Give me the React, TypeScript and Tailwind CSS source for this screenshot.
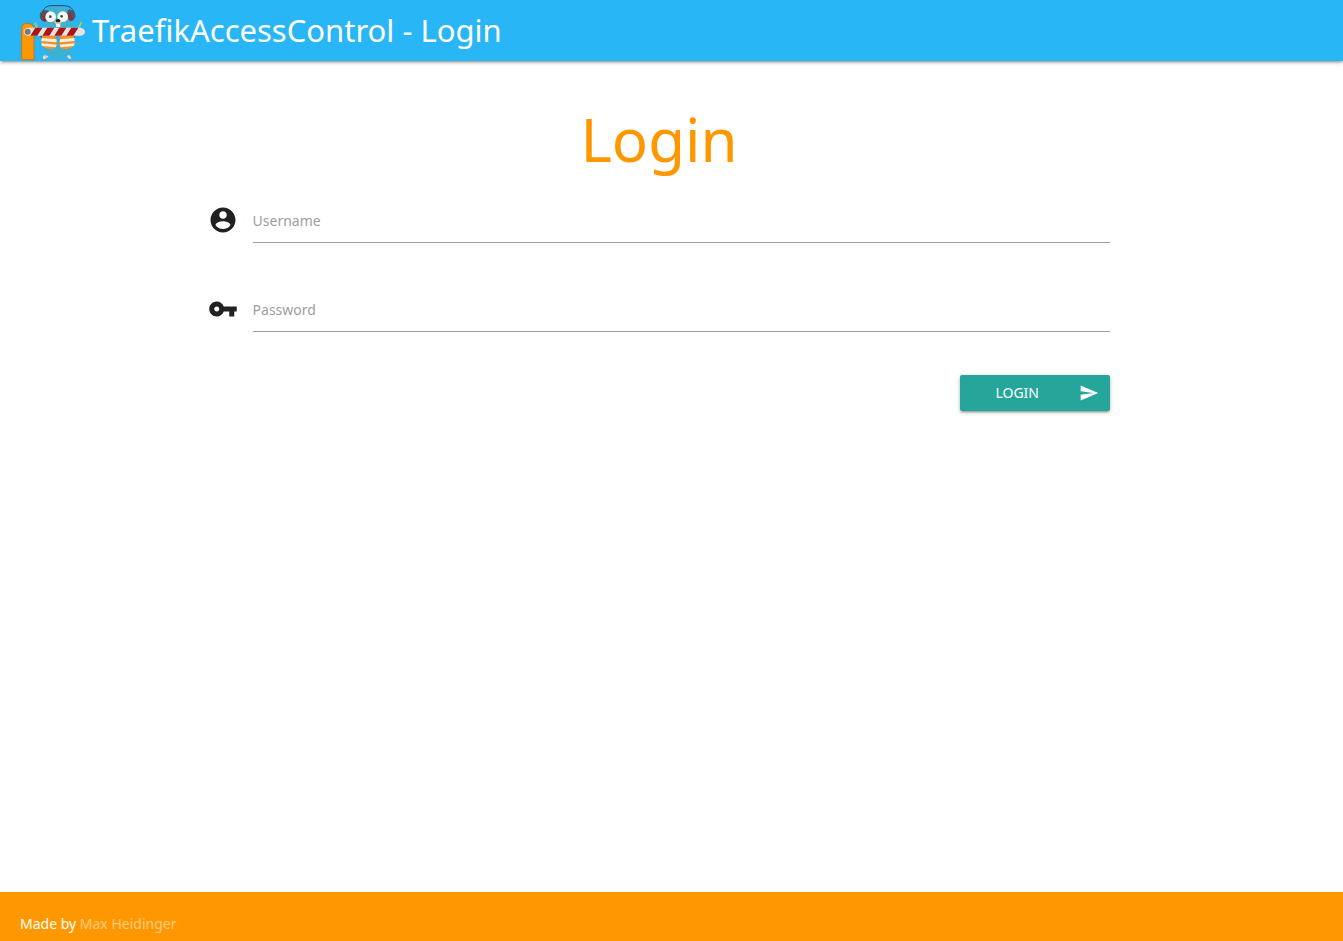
import type { ReactNode } from "react";

function Logo() {
  return (
    <svg viewBox="30 12 198 174" className="h-[58px] w-[66px] shrink-0" aria-hidden="true">
      <path d="M76 70l8 20M214 68l-10 20" stroke="#b5cf4b" strokeWidth="5" strokeLinecap="round" />
      <path d="M102 166q-6 4-2 11q8 3 16-9zM170 168l6 8q6 3 8-2q-1-7-8-9z" fill="#f2d3b4" />
      <path d="M107 45Q111 17 144 17Q178 17 182 45L188 78Q192 118 188 142Q180 173 143 174Q103 172 98 143Q95 105 104 76Z" fill="#3fb0cf" />
      <path d="M97 38Q102 17 126 17H163Q187 18 192 38" fill="none" stroke="#254b61" strokeWidth="3" />
      <path d="M108 30Q88 31 89 48Q91 64 105 65Q116 53 116 33Z" fill="#505461" />
      <path d="M178 28Q195 32 197 47Q194 60 185 62Q174 51 172 32Z" fill="#505461" />
      <path d="M104 39Q94 51 101 64Q107 68 112 59L115 38Z" fill="#833443" />
      <path d="M178 39Q190 50 188 61Q180 67 175 56L171 38Z" fill="#833443" />
      <circle cx="122" cy="50" r="16" fill="#f7f7f4" />
      <circle cx="158" cy="50" r="16" fill="#f7f7f4" />
      <circle cx="121" cy="50" r="4" fill="#344d55" />
      <circle cx="155" cy="49" r="4" fill="#344d55" />
      <path d="M138 69h13v12h-13z" fill="#f7f7f4" />
      <ellipse cx="144" cy="66" rx="11" ry="6" fill="#d6c7a5" />
      <ellipse cx="144" cy="62" rx="7" ry="5" fill="#222" />
      <path d="M94 101q-3 12 5 15M190 101q4 12-4 16" fill="none" stroke="#63533c" strokeWidth="5" />
      <path d="M96 105H137L141 137Q132 151 112 146Q98 143 94 133ZM151 105H192L195 133Q187 147 169 148Q152 147 148 137Z" fill="#f29325" />
      <path d="M95 114L139 118L140 127L94 123ZM94 130L140 134L137 142L96 138ZM150 118L193 114L194 123L149 127ZM149 134L194 130L191 138L152 142Z" fill="#f5eee5" />
      <path d="M35 179V86Q36 70 53 70Q70 71 72 87V179Z" fill="#ff9800" stroke="#b87826" strokeWidth="3" />
      <path d="M54 83H213Q224 86 225 96Q223 106 213 107H54Q41 105 41 95Q42 84 54 83Z" fill="#e6e3e1" />
      <path d="M76 83H97L82 107H61ZM112 83H133L118 107H97ZM148 83H169L154 107H133ZM184 83H205L190 107H169Z" fill="#ad1519" />
      <circle cx="53" cy="95" r="9" fill="#78797b" />
    </svg>
  );
}

interface FieldProps {
  id: string;
  label: string;
  type: string;
  autoComplete: string;
  icon: ReactNode;
}

function Field({ id, label, type, autoComplete, icon }: FieldProps) {
  return (
    <div className="flex">
      <svg viewBox="0 0 24 24" className="mt-2 h-[30px] w-[30px] shrink-0 text-[#212121]" fill="currentColor" aria-hidden="true">
        {icon}
      </svg>
      <div className="relative ml-[15px] flex-1">
        <input
          id={id}
          type={type}
          autoComplete={autoComplete}
          placeholder=" "
          className="peer block h-[46px] w-full border-b border-[#9e9e9e] bg-transparent text-sm outline-none focus:border-[#26a69a]"
        />
        <label
          htmlFor={id}
          className="pointer-events-none absolute top-3.5 left-0 hidden text-sm text-[#9e9e9e] peer-placeholder-shown:block"
        >
          {label}
        </label>
      </div>
    </div>
  );
}

export default function App() {
  return (
    <div className="flex min-h-screen flex-col bg-white font-['Noto_Sans',sans-serif] text-black/87">
      <header className="flex h-[61px] items-center bg-[#29b6f6] pl-5 text-white shadow-[0_2px_2px_0_rgba(0,0,0,0.14),0_3px_1px_-2px_rgba(0,0,0,0.12),0_1px_5px_0_rgba(0,0,0,0.2)]">
        <a href="/" className="flex items-center gap-1.5 pt-1">
          <Logo />
          <span className="pb-1.5 text-[31px] leading-10 whitespace-nowrap">TraefikAccessControl - Login</span>
        </a>
      </header>

      <main className="flex flex-1 justify-center pr-[25px]">
        <form className="w-[68.5%]" onSubmit={(event) => event.preventDefault()}>
          <h1 className="mt-[38px] text-center text-[60px] leading-20 text-[#ff9800]">Login</h1>
          <div className="mt-[18px] flex flex-col gap-[43px]">
            <Field
              id="username"
              label="Username"
              type="text"
              autoComplete="username"
              icon={
                <path d="M12 2C6.48 2 2 6.48 2 12s4.48 10 10 10 10-4.48 10-10S17.52 2 12 2zm0 3c1.66 0 3 1.34 3 3s-1.34 3-3 3-3-1.34-3-3 1.34-3 3-3zm0 14.2c-2.5 0-4.71-1.28-6-3.22.03-1.99 4-3.08 6-3.08 1.99 0 5.97 1.09 6 3.08-1.29 1.94-3.5 3.22-6 3.22z" />
              }
            />
            <Field
              id="password"
              label="Password"
              type="password"
              autoComplete="current-password"
              icon={
                <path d="M12.65 10C11.83 7.67 9.61 6 7 6c-3.31 0-6 2.69-6 6s2.69 6 6 6c2.61 0 4.83-1.67 5.65-4H17v4h4v-4h2v-4H12.65zM7 14c-1.1 0-2-.9-2-2s.9-2 2-2 2 .9 2 2-.9 2-2 2z" />
              }
            />
          </div>
          <div className="mt-[43px] flex justify-end">
            <button
              type="submit"
              className="flex h-9 w-[150px] items-center justify-between rounded-xs bg-[#26a69a] pr-[11px] pl-[35px] text-sm text-white uppercase shadow-[0_2px_2px_0_rgba(0,0,0,0.14),0_3px_1px_-2px_rgba(0,0,0,0.12),0_1px_5px_0_rgba(0,0,0,0.2)]"
            >
              Login
              <svg viewBox="0 0 24 24" className="h-5 w-5" fill="currentColor" aria-hidden="true">
                <path d="M2.01 21L23 12 2.01 3 2 10l15 2-15 2z" />
              </svg>
            </button>
          </div>
        </form>
      </main>

      <footer className="h-[49px] bg-[#ff9800] px-5 pt-[22px] text-sm text-white">
        Made by{" "}
        <a href="#author" className="text-[#ffcc80]">
          Max Heidinger
        </a>
      </footer>
    </div>
  );
}
